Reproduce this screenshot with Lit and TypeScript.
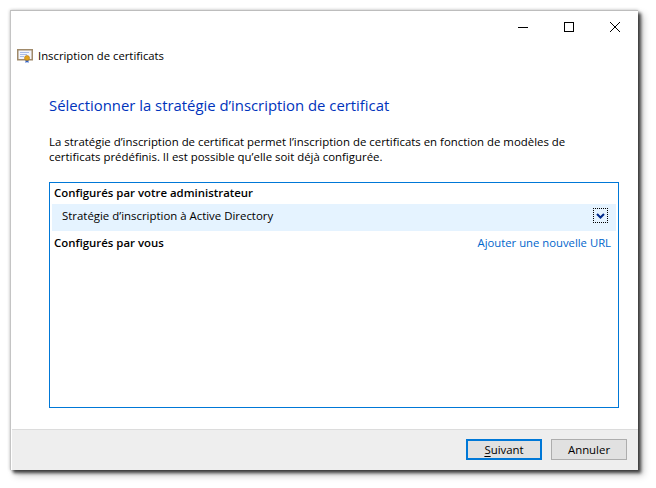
import { LitElement, html, css } from "lit";
import { customElement } from "lit/decorators.js";

@customElement("app-root")
export class AppRoot extends LitElement {
  static styles = css`
    :host { display: block; width: 656px; height: 488px; background: #fff; font-family: "Open Sans", "Noto Sans", sans-serif; font-size: 11.42px; color: #000; overflow: hidden; }
    .page { padding: 10px 18px 18px 10px; box-sizing: border-box; height: 488px; }
    .win { width: 628px; height: 460px; background: #fff; display: flex; flex-direction: column; box-sizing: border-box; border-top: 1px solid #bdbdbd; border-left: 1px solid #c4c4c4; box-shadow: 0 0 3px rgba(0,0,0,.25), 3px 3px 3px rgba(0,0,0,.65), 5px 5px 7px rgba(0,0,0,.25); }
    .titlebar { height: 31px; display: flex; justify-content: flex-end; flex: none; }
    .ctl { width: 46px; height: 31px; display: flex; align-items: center; justify-content: center; }
    .ctl svg { display: block; }
    .caption { flex: none; height: 28px; display: flex; align-items: center; gap: 4px; padding-left: 6px; font-size: 11.3px; }
    .caption span { line-height: 16px; }
    .content { flex: 1; padding: 0 19px 21px 38px; display: flex; flex-direction: column; min-height: 0; }
    h1 { margin: 24px 0 0; font-weight: 400; font-size: 14.86px; line-height: 22px; color: #0033bc; }
    p { margin: 18px 0 0; line-height: 15px; width: 540px; }
    .box { flex: 1; margin-top: 18px; border: 1px solid #0078d7; padding: 0 2px; display: flex; flex-direction: column; }
    .sec { font-weight: 600; line-height: 15px; padding: 0 0 2px 2px; box-sizing: border-box; height: 20px; display: flex; align-items: center; justify-content: space-between; flex: none; }
    .row { height: 27px; box-sizing: border-box; padding: 0 8px 4px 10px; margin-top: 1px; background: #e5f3ff; display: flex; align-items: center; justify-content: space-between; flex: none; }
    .sec2 { height: 18px; margin-top: 3px; padding-right: 5px; }
    a { color: #0066cc; font-weight: 400; font-size: 11.3px; text-decoration: none; }
    .chev { width: 15px; height: 15px; border: 1px dotted #000; box-sizing: border-box; display: flex; align-items: center; justify-content: center; background: #e5f3ff; }
    .footer { flex: none; height: 41px; margin-left: 1px; box-sizing: border-box; background: #eeeeee; border-top: 1px solid #dcdcdc; display: flex; justify-content: flex-end; align-items: flex-start; gap: 9px; padding: 9px 11px 0 0; }
    button { font: inherit; width: 76px; height: 21px; padding: 0; box-sizing: border-box; background: #e1e1e1; border: 1px solid #adadad; color: #000; line-height: 17px; }
    button.primary { border: 2px solid #0078d7; }
    u { text-underline-offset: 2px; }
  `;
  render() {
    return html`
      <div class="page">
        <div class="win">
          <div class="titlebar">
            <div class="ctl"><svg width="10" height="10" viewBox="0 0 10 10"><path d="M0 5.5h10" stroke="#000" fill="none"/></svg></div>
            <div class="ctl"><svg width="10" height="10" viewBox="0 0 10 10"><rect x=".5" y=".5" width="9" height="9" stroke="#000" fill="none"/></svg></div>
            <div class="ctl"><svg width="10" height="10" viewBox="0 0 10 10"><path d="M0 0l10 10M10 0L0 10" stroke="#000" fill="none" stroke-width="1"/></svg></div>
          </div>
          <div class="caption">
            <svg width="17" height="16" viewBox="0 0 17 16">
              <rect x=".75" y="1.75" width="14.500" height="10" fill="#f3f5fb" stroke="#a08a6a" stroke-width="1.500"/>
              <path d="M3 4.500h9M3 6.500h7M3 8.500h4" stroke="#a9bce6" fill="none"/>
              <path d="M8.500 11v4l1.500-1 1.500 1v-4z" fill="#2f5fc4"/>
              <circle cx="10" cy="10" r="2.500" fill="#e0a21a" stroke="#b97a10" stroke-width=".6"/>
            </svg>
            <span>Inscription de certificats</span>
          </div>
          <div class="content">
            <h1>Sélectionner la stratégie d’inscription de certificat</h1>
            <p>La stratégie d’inscription de certificat permet l’inscription de certificats en fonction de modèles de certificats prédéfinis. Il est possible qu’elle soit déjà configurée.</p>
            <div class="box">
              <div class="sec">Configurés par votre administrateur</div>
              <div class="row">
                <span>Stratégie d’inscription à Active Directory</span>
                <span class="chev"><svg width="9" height="6" viewBox="0 0 9 6"><path d="M1 1l3.500 3.500L8 1" stroke="#002a8c" stroke-width="2" fill="none"/></svg></span>
              </div>
              <div class="sec sec2"><span>Configurés par vous</span><a href="#">Ajouter une nouvelle URL</a></div>
            </div>
          </div>
          <div class="footer">
            <button class="primary"><u>S</u>uivant</button>
            <button>Annuler</button>
          </div>
        </div>
      </div>
    `;
  }
}
